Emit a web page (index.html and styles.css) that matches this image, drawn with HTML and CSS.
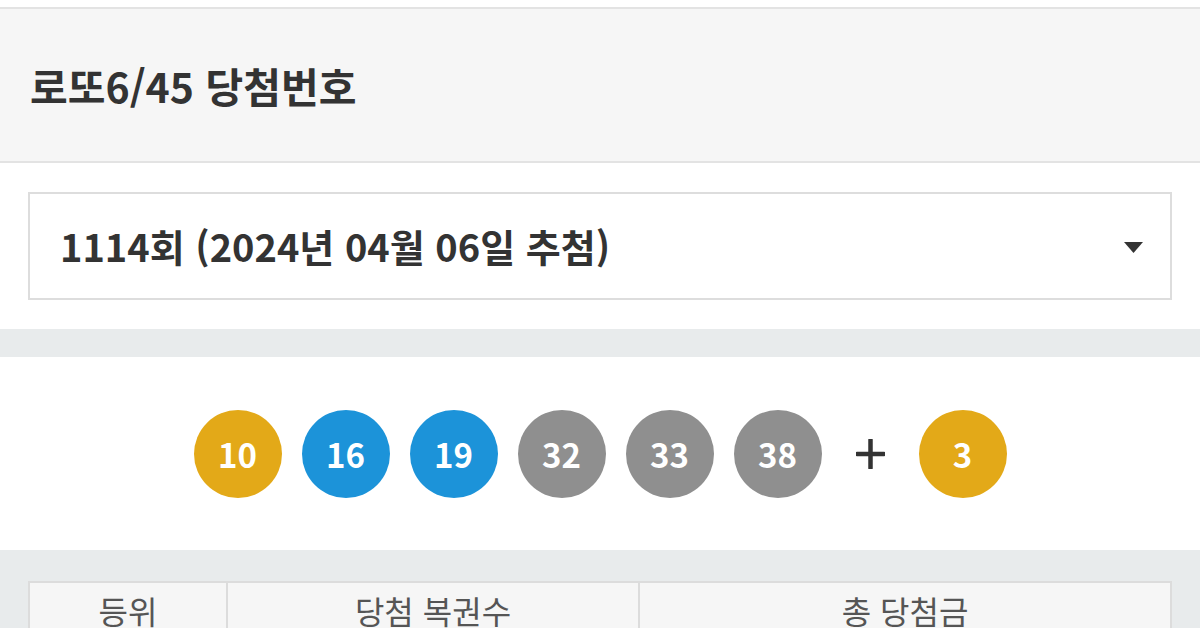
FILE: index.html
```html
<!DOCTYPE html>
<html lang="ko">
<head>
<meta charset="utf-8">
<title>로또6/45 당첨번호</title>
<link rel="stylesheet" href="styles.css">
</head>
<body>
<div class="page">
  <header class="title-bar">
    <h1 class="title">로또6/45 당첨번호</h1>
  </header>
  <section class="select-wrap">
    <div class="select">
      <span class="select-text">1114회 (2024년 04월 06일 추첨)</span>
      <svg class="caret" width="19" height="11" viewBox="0 0 19 11"><path d="M0 0 H19 L9.5 11 Z" fill="#333"/></svg>
    </div>
  </section>
  <div class="band"></div>
  <section class="balls">
    <span class="ball yellow">10</span>
    <span class="ball blue">16</span>
    <span class="ball blue">19</span>
    <span class="ball gray">32</span>
    <span class="ball gray">33</span>
    <span class="ball gray">38</span>
    <span class="plus">
      <svg width="29" height="30" viewBox="0 0 29 30"><path d="M14.5 1 V29 M1 15 H28" stroke="#333" stroke-width="4.5" stroke-linecap="round"/></svg>
    </span>
    <span class="ball yellow">3</span>
  </section>
  <section class="table-wrap">
    <table class="result">
      <thead>
        <tr>
          <th class="c1">등위</th>
          <th class="c2">당첨 복권수</th>
          <th class="c3">총 당첨금</th>
        </tr>
      </thead>
    </table>
  </section>
</div>
</body>
</html>
```

FILE: styles.css
```css
* { box-sizing: border-box; }
html, body {
  margin: 0;
  padding: 0;
  background: #fff;
  font-family: "Noto Sans CJK KR", "Noto Sans", sans-serif;
  color: #333;
  overflow: hidden;
}
.page {
  width: 1200px;
  height: 628px;
  overflow: hidden;
  padding-top: 7px;
}
.title-bar {
  background: #f6f6f6;
  border-top: 2px solid #e3e3e3;
  border-bottom: 2px solid #e3e3e3;
  height: 156px;
  display: flex;
  align-items: center;
  padding: 0 30px;
}
.title {
  margin: 0;
  font-size: 41px;
  font-weight: 700;
  color: #333;
  line-height: 1;
}
.select-wrap {
  padding: 29px 28px 29px 28px;
}
.select {
  height: 108px;
  border: 2px solid #dddddd;
  display: flex;
  align-items: center;
  justify-content: space-between;
  padding: 0 27px 0 30px;
}
.select-text {
  font-size: 38px;
  font-weight: 700;
  color: #333;
  line-height: 1;
}
.caret { display: block; margin-top: 2px; }
.band {
  height: 28px;
  background: #e8ebec;
}
.balls {
  height: 193px;
  display: flex;
  align-items: center;
  justify-content: center;
  gap: 20px;
  padding-top: 0;
}
.ball {
  width: 88px;
  height: 88px;
  border-radius: 50%;
  display: flex;
  align-items: center;
  justify-content: center;
  color: #fff;
  font-size: 33px;
  font-weight: 700;
}
.yellow { background: #e3a918; }
.blue { background: #1c93d9; }
.gray { background: #8f8f8f; }
.plus {
  display: flex;
  align-items: center;
  justify-content: center;
  width: 57px;
}
.plus svg { display: block; }
.table-wrap {
  background: #e8ebec;
  padding: 31px 28px 0 28px;
  height: 200px;
}
.result {
  width: 100%;
  border-collapse: collapse;
  background: #f6f6f6;
}
.result th {
  border: 2px solid #dcdcdc;
  font-size: 32px;
  font-weight: 400;
  color: #555;
  height: 90px;
  padding-top: 8px;
  vertical-align: top;
  line-height: 1.2;
}
.c1 { width: 198px; }
.c2 { width: 412px; }
```
